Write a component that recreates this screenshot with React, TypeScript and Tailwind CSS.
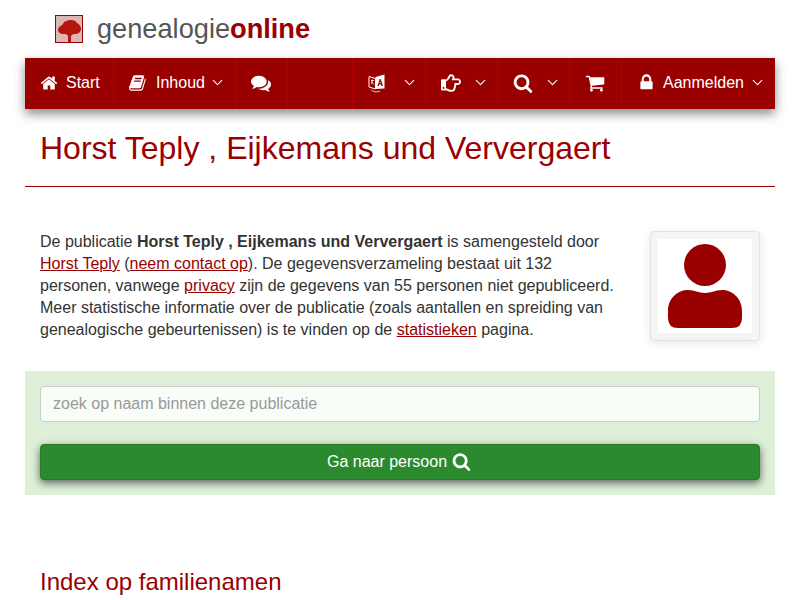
import React from 'react';
import { FaRegHandPointRight } from 'react-icons/fa';
import { FiChevronDown } from 'react-icons/fi';

const Fa: React.FC<{ d: string; className: string }> = ({ d, className }) => (
  <svg viewBox="0 0 1792 1792" fill="currentColor" className={className}>
    <path d={d} />
  </svg>
);

const ICONS = {
  home: 'M1472 992v480q0 26-19 45t-45 19h-384v-384h-256v384h-384q-26 0-45-19t-19-45v-480q0-1 .5-3t.5-3l575-474 575 474q1 2 1 6zm223-69l-62 74q-8 9-21 11h-3q-13 0-21-7l-692-577-692 577q-12 8-24 7-13-2-21-11l-62-74q-8-10-7-23.500t11-21.500l719-599q32-26 76-26t76 26l244 204v-195q0-14 9-23t23-9h192q14 0 23 9t9 23v408l219 182q10 8 11 21.500t-7 23.500z',
  book: 'M1639 478q40 57 18 129l-275 906q-19 64-76.500 107.500t-122.500 43.500h-923q-77 0-148.500-53.500t-99.500-131.500q-24-67-2-127 0-4 3-27t4-37q1-8-3-21.500t-3-19.500q2-11 8-21t16.500-23.500 16.500-23.500q23-38 45-91.500t30-91.500q3-10 .5-30t-.5-28q3-11 17-28t17-23q21-36 42-92t25-90q1-9-2.500-32t.5-28q4-13 22-30.500t22-22.500q19-26 42.500-84.500t27.500-96.500q1-8-3-25.500t-2-26.500q2-8 9-18t18-23 17-21q8-12 16.500-30.500t15-35 16-36 19.500-32 26.500-23.500 36-11.500 47.500 5.500l-1 3q38-9 51-9h761q74 0 114 56t18 130l-274 906q-36 119-71.500 153.500t-128.500 34.500h-869q-27 0-38 15-11 16-1 43 24 70 144 70h923q29 0 56-15.500t35-41.500l300-987q7-22 5-57 38 15 59 43zm-1064 2q-4 13 2 22.500t20 9.500h608q13 0 25.500-9.500t16.500-22.500l21-64q4-13-2-22.500t-20-9.500h-608q-13 0-25.500 9.500t-16.500 22.500zm-83 256q-4 13 2 22.500t20 9.500h608q13 0 25.500-9.500t16.500-22.500l21-64q4-13-2-22.500t-20-9.500h-608q-13 0-25.500 9.500t-16.500 22.500z',
  comments: 'M1408 768q0 139-94 257t-256.500 186.500-353.500 68.500q-86 0-176-16-124 88-278 128-36 9-86 16h-3q-11 0-20.500-8t-11.500-21q-1-3-1-6.500t.5-6.500 2-6l2.500-5 3.500-5.500 4-5 4.500-5 4-4.500q5-6 23-25t26-29.500 22.500-29 25-38.500 20.500-44q-124-72-195-177t-71-224q0-139 94-257t256.500-186.500 353.500-68.500 353.500 68.500 256.500 186.500 94 257zm384 256q0 120-71 224.500t-195 176.500q10 24 20.500 44t25 38.500 22.500 29 26 29.500 23 25q1 1 4 4.500t4.500 5 4 5 3.500 5.500l2.500 5 2 6 .5 6.500-1 6.500q-3 14-13 22t-22 7q-50-7-86-16-154-40-278-128-90 16-176 16-271 0-472-132 58 4 88 4 161 0 309-45t264-129q125-92 192-212t67-254q0-77-23-152 129 71 204 178t75 230z',
  search: 'M1216 832q0-185-131.500-316.500t-316.500-131.500-316.500 131.500-131.500 316.500 131.500 316.500 316.500 131.500 316.500-131.500 131.500-316.500zm512 832q0 52-38 90t-90 38q-54 0-90-38l-343-342q-179 124-399 124-143 0-273.500-55.500t-225-150-150-225-55.500-273.500 55.500-273.500 150-225 225-150 273.500-55.500 273.500 55.500 225 150 150 225 55.500 273.500q0 220-124 399l343 343q37 37 37 90z',
  cart: 'M704 1536q0 52-38 90t-90 38-90-38-38-90 38-90 90-38 90 38 38 90zm896 0q0 52-38 90t-90 38-90-38-38-90 38-90 90-38 90 38 38 90zm128-1088v512q0 24-16.500 42.500t-40.500 21.500l-1044 122q13 60 13 70 0 16-24 64h920q26 0 45 19t19 45-19 45-45 19h-1024q-26 0-45-19t-19-45q0-11 8-31.500t16-36 21.500-40 15.500-29.500l-177-823h-204q-26 0-45-19t-19-45 19-45 45-19h256q16 0 28.500 6.500t19.500 15.500 13 24.500 8 26 5.500 29.500 4.500 26h1201q26 0 45 19t19 45z',
  lock: 'M640 768h512v-192q0-106-75-181t-181-75-181 75-75 181v192zm832 96v576q0 40-28 68t-68 28h-960q-40 0-68-28t-28-68v-576q0-40 28-68t68-28h32v-192q0-184 132-316t316-132 316 132 132 316v192h32q40 0 68 28t28 68z',
};

const LanguageIcon = () => (
  <svg viewBox="0 0 17 20" className="w-[17px] h-[20px] mr-[9px]">
    <path d="M1 3.500 7.500 5.500V16L1 14z" fill="none" stroke="#fff" strokeWidth="1" />
    <path d="M3 7.500h3M4.500 6.500 3.500 11M3.500 8.500l2.500 3" fill="none" stroke="#fff" strokeWidth=".8" />
    <path d="M7.500 4 16.500 1.500V15.500L7.500 16z" fill="#fff" />
    <path d="M9.500 13 11.800 6h1l2.200 7h-1.500l-.4-1.600h-1.900L10.800 13zM11.600 10.200h1.100l-.55-2z" fill="#990000" />
    <path d="M3 16.500c2 2.500 6 3 9 1.500" fill="none" stroke="#fff" strokeWidth=".8" />
  </svg>
);

const Chevron: React.FC<{ className?: string }> = ({ className = 'ml-[7px]' }) => (
  <FiChevronDown strokeWidth={1.5} className={`w-[17px] h-[17px] ${className}`} />
);

const NavItem: React.FC<{ width: string; children?: React.ReactNode; last?: boolean }> = ({ width, children, last }) => (
  <a className={`flex items-center h-full pl-[15px] pb-[2px] text-white text-base ${width} ${last ? '' : 'border-r border-[#b00000]'}`}>{children}</a>
);

const App: React.FC = () => {
  return (
    <div className="w-[800px] h-[600px] overflow-hidden bg-white px-[25px] text-[#333] text-base font-['Liberation_Sans',Arial,sans-serif]">
      <header className="h-[58px] flex items-center pl-[30px]">
        <div className="w-[28px] h-[28px] border border-[#990000] bg-[#dcb8b4] flex items-center justify-center">
          <svg viewBox="0 0 26 26" className="w-[26px] h-[26px] blur-[0.4px]">
            <path d="M2 14c0-3 3-4 5-6 1-3 5-4 8-4 3 0 5 1 6 3 2 1 4 3 4 6 0 3-3 5-6 5-1 0-2 0-3 1l-1 1v6h-3v-6c-1-2-3-2-5-2-3 0-5-2-5-4z" fill="#b5170f" />
          </svg>
        </div>
        <div className="ml-[14px] text-[27.2px] leading-none text-[#555]">
          genealogie<span className="font-bold text-[#990000]">online</span>
        </div>
      </header>

      <nav className="h-[51px] bg-[#990000] flex shadow-[0_5px_10px_rgba(0,0,0,0.45)]">
        <NavItem width="w-[89px]"><Fa d={ICONS.home} className="w-[18px] h-[18px] mr-[8px]" />Start</NavItem>
        <NavItem width="w-[122px]"><Fa d={ICONS.book} className="w-[18px] h-[18px] mr-[9px]" />Inhoud<Chevron className="ml-[4px]" /></NavItem>
        <NavItem width="w-[52px]"><Fa d={ICONS.comments} className="w-[20px] h-[20px]" /></NavItem>
        <NavItem width="w-[65px]" />
        <NavItem width="w-[73px]"><LanguageIcon /><Chevron /></NavItem>
        <NavItem width="w-[72px]"><FaRegHandPointRight className="w-[20px] h-[20px] mr-[4px]" /><Chevron /></NavItem>
        <NavItem width="w-[72px]"><Fa d={ICONS.search} className="w-[20px] h-[20px] mr-[4px]" /><Chevron /></NavItem>
        <NavItem width="w-[52px]"><Fa d={ICONS.cart} className="w-[20px] h-[20px]" /></NavItem>
        <NavItem width="flex-1" last><Fa d={ICONS.lock} className="w-[19px] h-[19px] mr-[7px]" />Aanmelden<Chevron className="ml-[5px]" /></NavItem>
      </nav>

      <div className="px-[15px] h-[78px] border-b border-[#990000] flex items-center">
        <h1 className="text-[32px] leading-none text-[#990000] mt-[1px]">Horst Teply , Eijkemans und Ververgaert</h1>
      </div>

      <section className="flex justify-between px-[15px] mt-[44px] h-[140px]">
        <p className="w-[580px] leading-[22px]">
          De publicatie <b>Horst Teply , Eijkemans und Ververgaert</b> is samengesteld door{' '}
          <a className="text-[#990000] underline">Horst Teply</a> (<a className="text-[#990000] underline">neem contact op</a>). De gegevensverzameling bestaat uit 132 personen, vanwege <a className="text-[#990000] underline">privacy</a> zijn de gegevens van 55 personen niet gepubliceerd. Meer statistische informatie over de publicatie (zoals aantallen en spreiding van genealogische gebeurtenissen) is te vinden op de <a className="text-[#990000] underline">statistieken</a> pagina.
        </p>
        <div className="w-[110px] h-[110px] bg-[#f5f5f5] border border-[#e3e3e3] rounded-[4px] p-[7px] shadow-[0_2px_10px_rgba(0,0,0,0.1)]">
          <svg viewBox="0 0 94 94" className="w-[94px] h-[94px] bg-white">
            <circle cx="47" cy="26" r="21" fill="#990000" />
            <path d="M20 89Q10 89 10 79V72C10 59 20 51 30 51C37 51 40 54 47 54C54 54 57 51 64 51C74 51 84 59 84 72V79Q84 89 74 89Z" fill="#990000" />
          </svg>
        </div>
      </section>

      <section className="h-[124px] bg-[#dff0d8] px-[15px] pt-[15px]">
        <input
          placeholder="zoek op naam binnen deze publicatie"
          className="block w-full h-[36px] px-[12px] bg-[#f9fdf8] border border-[#ccc] rounded-[4px] text-base placeholder:text-[#999] outline-none"
        />
        <button className="mt-[22px] w-full h-[36px] pr-[2px] rounded-[4px] bg-[#2c8a2e] border border-[#277a29] text-white flex items-center justify-center gap-[5px] shadow-[0_3px_8px_rgba(0,0,0,0.6)]">
          Ga naar persoon <Fa d={ICONS.search} className="w-[19px] h-[19px] -mt-[2px]" />
        </button>
      </section>

      <h2 className="px-[15px] mt-[73px] text-[24px] leading-[28px] text-[#990000]">Index op familienamen</h2>
    </div>
  );
};

export default App;
